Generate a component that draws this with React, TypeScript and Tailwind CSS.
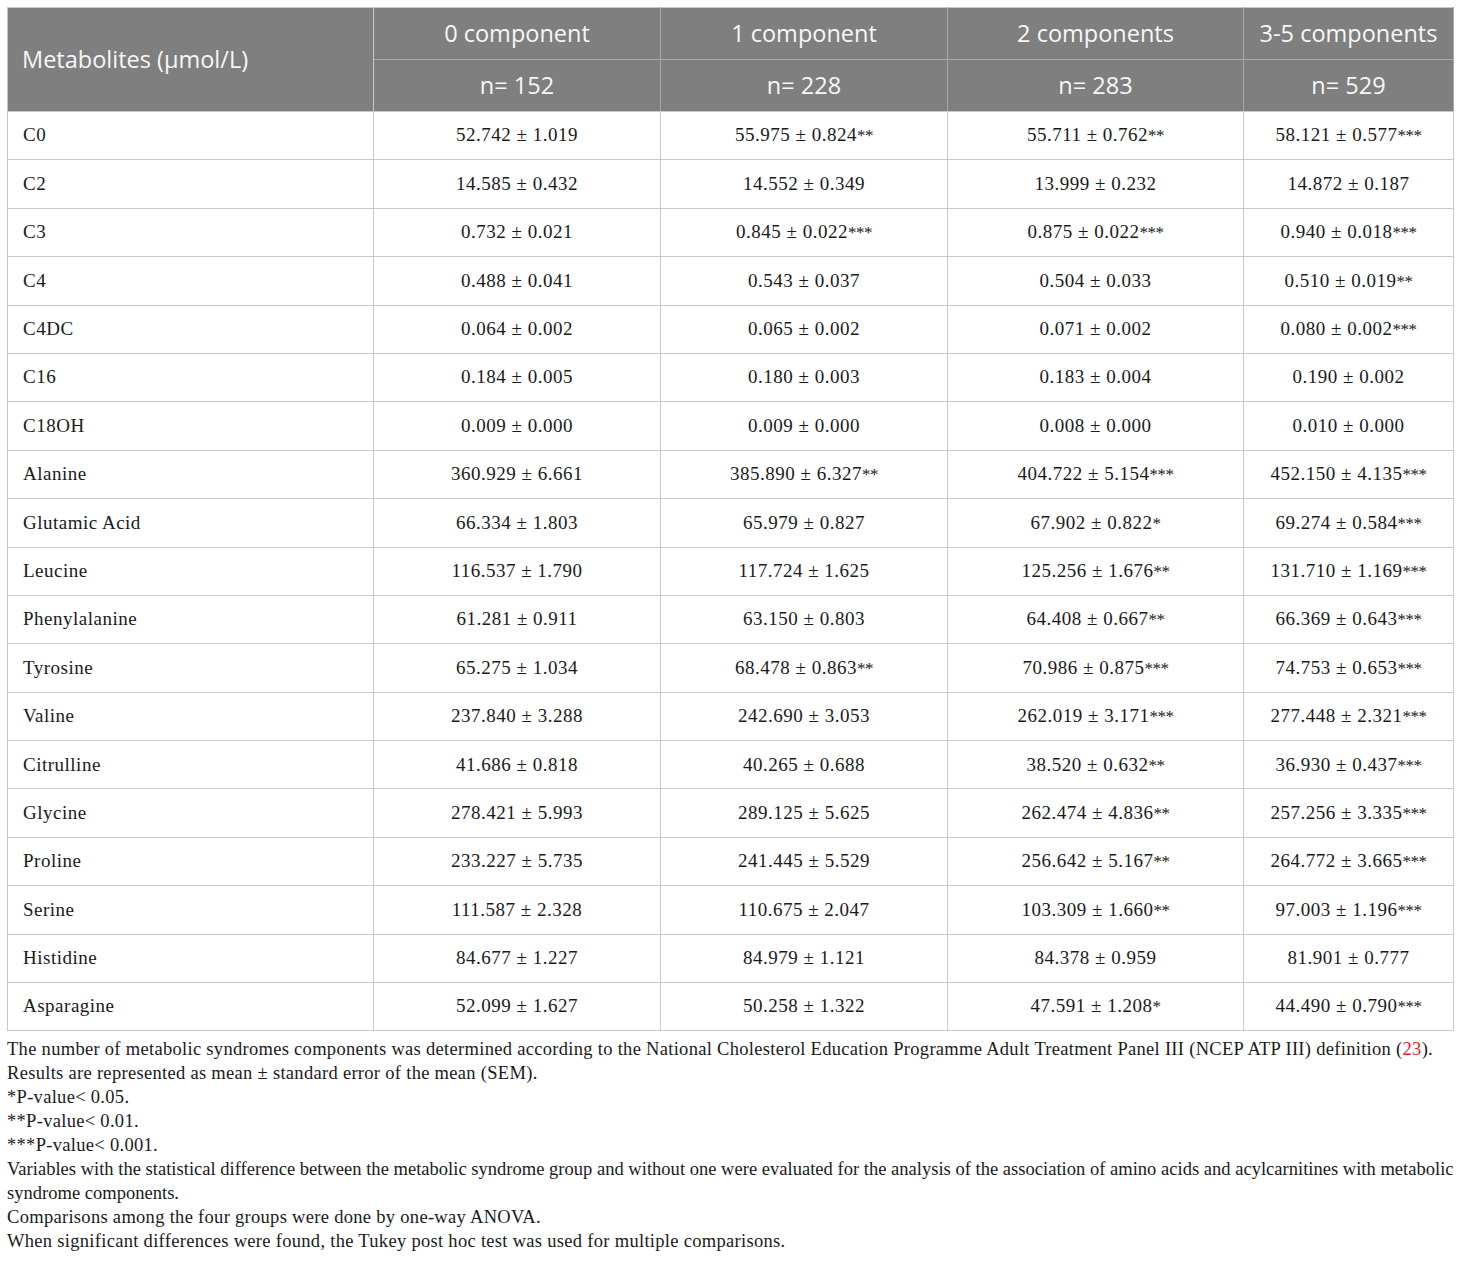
const groups = [
  { label: '0 component', n: 'n= 152' },
  { label: '1 component', n: 'n= 228' },
  { label: '2 components', n: 'n= 283' },
  { label: '3-5 components', n: 'n= 529' },
];

const rows: [string, string, string, string, string][] = [
  ['C0', '52.742 ± 1.019', '55.975 ± 0.824**', '55.711 ± 0.762**', '58.121 ± 0.577***'],
  ['C2', '14.585 ± 0.432', '14.552 ± 0.349', '13.999 ± 0.232', '14.872 ± 0.187'],
  ['C3', '0.732 ± 0.021', '0.845 ± 0.022***', '0.875 ± 0.022***', '0.940 ± 0.018***'],
  ['C4', '0.488 ± 0.041', '0.543 ± 0.037', '0.504 ± 0.033', '0.510 ± 0.019**'],
  ['C4DC', '0.064 ± 0.002', '0.065 ± 0.002', '0.071 ± 0.002', '0.080 ± 0.002***'],
  ['C16', '0.184 ± 0.005', '0.180 ± 0.003', '0.183 ± 0.004', '0.190 ± 0.002'],
  ['C18OH', '0.009 ± 0.000', '0.009 ± 0.000', '0.008 ± 0.000', '0.010 ± 0.000'],
  ['Alanine', '360.929 ± 6.661', '385.890 ± 6.327**', '404.722 ± 5.154***', '452.150 ± 4.135***'],
  ['Glutamic Acid', '66.334 ± 1.803', '65.979 ± 0.827', '67.902 ± 0.822*', '69.274 ± 0.584***'],
  ['Leucine', '116.537 ± 1.790', '117.724 ± 1.625', '125.256 ± 1.676**', '131.710 ± 1.169***'],
  ['Phenylalanine', '61.281 ± 0.911', '63.150 ± 0.803', '64.408 ± 0.667**', '66.369 ± 0.643***'],
  ['Tyrosine', '65.275 ± 1.034', '68.478 ± 0.863**', '70.986 ± 0.875***', '74.753 ± 0.653***'],
  ['Valine', '237.840 ± 3.288', '242.690 ± 3.053', '262.019 ± 3.171***', '277.448 ± 2.321***'],
  ['Citrulline', '41.686 ± 0.818', '40.265 ± 0.688', '38.520 ± 0.632**', '36.930 ± 0.437***'],
  ['Glycine', '278.421 ± 5.993', '289.125 ± 5.625', '262.474 ± 4.836**', '257.256 ± 3.335***'],
  ['Proline', '233.227 ± 5.735', '241.445 ± 5.529', '256.642 ± 5.167**', '264.772 ± 3.665***'],
  ['Serine', '111.587 ± 2.328', '110.675 ± 2.047', '103.309 ± 1.660**', '97.003 ± 1.196***'],
  ['Histidine', '84.677 ± 1.227', '84.979 ± 1.121', '84.378 ± 0.959', '81.901 ± 0.777'],
  ['Asparagine', '52.099 ± 1.627', '50.258 ± 1.322', '47.591 ± 1.208*', '44.490 ± 0.790***'],
];

function Value({ text }: { text: string }) {
  const m = text.match(/^(.*?)(\*+)$/);
  if (!m) return <>{text}</>;
  return (
    <>
      {m[1]}
      <span className="text-[17px] tracking-[-0.5px]">{m[2]}</span>
    </>
  );
}

export default function App() {
  const serif = { fontFamily: '"Liberation Serif", "Times New Roman", serif' };
  const sans = { fontFamily: '"Open Sans", "Noto Sans", sans-serif' };

  return (
    <div className="min-h-[1265px] w-[1460px] bg-white px-[7px] pt-[7px]">
      <table className="w-[1446px] table-fixed border-collapse">
        <colgroup>
          <col className="w-[366px]" />
          <col className="w-[287px]" />
          <col className="w-[287px]" />
          <col className="w-[296px]" />
          <col className="w-[210px]" />
        </colgroup>
        <thead style={sans} className="bg-[#7f7f7f] text-[23.5px] font-normal text-[#f7f7f7]">
          <tr className="h-[52px]">
            <th
              rowSpan={2}
              className="border border-[#c9c9c9] px-[14px] text-left font-normal"
            >
              Metabolites (µmol/L)
            </th>
            {groups.map((g) => (
              <th key={g.label} className="border border-[#a9a9a9] border-t-[#c9c9c9] font-normal">
                {g.label}
              </th>
            ))}
          </tr>
          <tr className="h-[52px]">
            {groups.map((g) => (
              <th key={g.n} className="border border-[#a9a9a9] border-b-[#c9c9c9] font-normal">
                {g.n}
              </th>
            ))}
          </tr>
        </thead>
        <tbody style={serif} className="text-[19px] tracking-[0.5px] text-[#1a1a1a]">
          {rows.map((r) => (
            <tr key={r[0]} className="h-[48.4px]">
              <td className="border border-[#c9c9c9] px-[15px] text-left">{r[0]}</td>
              {r.slice(1).map((v, i) => (
                <td key={i} className="border border-[#c9c9c9] text-center">
                  <Value text={v} />
                </td>
              ))}
            </tr>
          ))}
        </tbody>
      </table>
      <div
        style={serif}
        className="mt-[6px] w-[1446px] text-[18.5px] leading-[24px] tracking-[0.3px] text-[#1a1a1a]"
      >
        <p>
          The number of metabolic syndromes components was determined according to the National Cholesterol
          Education Programme Adult Treatment Panel III (NCEP ATP III) definition (
          <span className="text-[#e0252b]">23</span>).
        </p>
        <p>Results are represented as mean ± standard error of the mean (SEM).</p>
        <p>*P-value&lt; 0.05.</p>
        <p>**P-value&lt; 0.01.</p>
        <p>***P-value&lt; 0.001.</p>
        <p className="whitespace-nowrap tracking-[0.02px]">
          Variables with the statistical difference between the metabolic syndrome group and without one were
          evaluated for the analysis of the association of amino acids and acylcarnitines with metabolic
          <br />
          syndrome components.
        </p>
        <p>Comparisons among the four groups were done by one-way ANOVA.</p>
        <p>When significant differences were found, the Tukey post hoc test was used for multiple comparisons.</p>
      </div>
    </div>
  );
}
